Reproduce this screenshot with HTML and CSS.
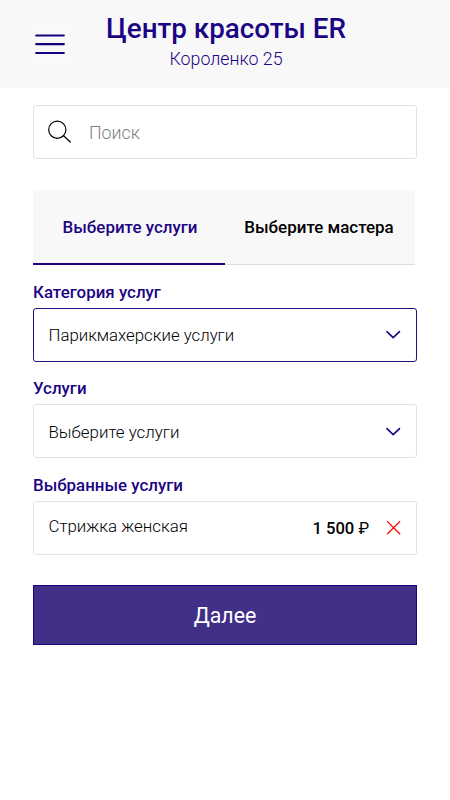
FILE: index.html
```html
<!DOCTYPE html>
<html lang="ru">
<head>
<meta charset="utf-8">
<title>Центр красоты ER</title>
<link rel="stylesheet" href="styles.css">
</head>
<body>
<header class="header">
  <button class="menu" aria-label="Меню"><svg width="30" height="22" viewBox="0 0 30 22"><path d="M1.2 2.5h27.6M1.2 11.2h27.6M1.2 20h27.6"/></svg></button>
  <div class="heading">
    <h1 class="title">Центр красоты ER</h1>
    <p class="address">Короленко 25</p>
  </div>
</header>
<main class="main">
  <div class="box search">
    <svg class="search-icon" width="24" height="24" viewBox="0 0 24 24"><circle cx="9.3" cy="9.7" r="8.6"/><path d="M15.6 15.8 22.3 22"/></svg>
    <span class="placeholder">Поиск</span>
  </div>
  <nav class="tabs">
    <a class="tab active">Выберите услуги</a>
    <a class="tab master">Выберите мастера</a>
  </nav>
  <h2 class="label">Категория услуг</h2>
  <div class="box selected">
    <span class="value category">Парикмахерские услуги</span>
    <svg class="chevron" width="16" height="10" viewBox="0 0 16 10"><path d="m1.9 1.7 6.3 6 6.3-6"/></svg>
  </div>
  <h2 class="label">Услуги</h2>
  <div class="box choice">
    <span class="value">Выберите услуги</span>
    <svg class="chevron" width="16" height="10" viewBox="0 0 16 10"><path d="m1.9 1.7 6.3 6 6.3-6"/></svg>
  </div>
  <h2 class="label chosen">Выбранные услуги</h2>
  <div class="box">
    <span class="value service">Стрижка женская</span>
    <span class="price">1 500 <span class="currency">₽</span></span>
    <svg class="remove" width="14" height="14" viewBox="0 0 14 14"><path d="m.5.6 12.2 12.2M12.7.6.5 12.8"/></svg>
  </div>
  <button class="next">Далее</button>
</main>
</body>
</html>
```
FILE: styles.css
```css
* { box-sizing: border-box; }
body { margin: 0; background: #fff; color: #000; font-family: Roboto, sans-serif; }
h1, h2, p { margin: 0; }
button { border: 0; padding: 0; font-family: inherit; }
svg { display: block; fill: none; flex: none; }
.header { height: 88px; background: #f8f8f8; display: flex; padding-left: 27px; }
.menu { width: 45px; height: 44px; margin-top: 22px; border-radius: 3px; background: #f9f9f9; display: flex; align-items: center; justify-content: center; }
.menu svg { stroke: #160080; stroke-width: 2.2; stroke-linecap: round; }
.heading { margin-left: 34px; width: 240px; text-align: center; white-space: nowrap; padding-top: 12px; }
.title { font-size: 27.8px; line-height: 33px; font-weight: 500; color: #1c0584; }
.address { font-size: 17.8px; line-height: 28px; font-weight: 300; color: #1c0584; }
.main { padding: 17px 33px 0; }
.box { height: 54px; border: 1px solid #e2e2e2; border-radius: 3px; display: flex; align-items: center; padding: 0 15px; }
.selected { border-color: #24117f; }
.search { padding-left: 14px; }
.search-icon { stroke: #000; stroke-width: 1.2; stroke-linecap: round; }
.placeholder { margin-left: 17px; font-size: 17.8px; font-weight: 300; color: #808080; }
.tabs { display: flex; height: 75px; width: 382px; margin: 31px 0 16px; background: #f8f8f8; }
.tab { flex: 1; display: flex; align-items: center; justify-content: center; font-size: 16.95px; font-weight: 500; border-bottom: 1px solid #ddd; }
.active { border-bottom: 2px solid #23007f; color: #1c0584; flex: 0 0 192px; padding-left: 2px; }
.master { padding-right: 2px; }
.label { height: 27px; line-height: 22px; font-size: 16.9px; font-weight: 500; color: #1c0584; }
.box + .label { margin-top: 15px; }
.box + .chosen { margin-top: 16px; }
.value { flex: 1; margin-left: -.5px; font-size: 16.9px; font-weight: 300; }
.category { font-size: 16.8px; }
.choice { padding-top: 1px; }
.service { padding-bottom: 4px; }
.chevron { stroke: #160080; stroke-width: 1.6; stroke-linecap: round; }
.price { font-size: 16.6px; font-weight: 500; margin-right: 18px; }
.currency { font-size: 16px; font-weight: 400; }
.remove { stroke: #f00; stroke-width: 1.3; stroke-linecap: round; }
.next { display: block; width: 100%; height: 59.5px; margin-top: 30px; padding-top: 2px; border: 1px solid #18067c; background: #412f88; color: #fff; font-size: 21.3px; }
```
